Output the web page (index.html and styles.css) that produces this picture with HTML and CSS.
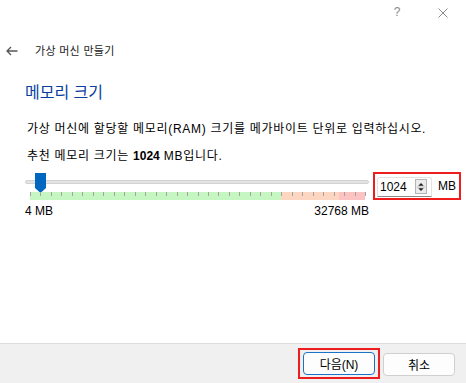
FILE: index.html
```html
<!DOCTYPE html>
<html lang="ko">
<head>
  <meta charset="UTF-8">
  <title>가상 머신 만들기</title>
  <link rel="stylesheet" href="styles.css">
</head>
<body>
  <div class="window">
    <!-- Barre de titre -->
    <div class="titlebar">
      <span class="caption-btn help">?</span>
      <span class="caption-btn">
        <svg width="10" height="10" viewBox="0 0 10 10"><path d="M0.5 0.5 L9.5 9.5 M9.5 0.5 L0.5 9.5" stroke="#8a8a8a" stroke-width="1" fill="none"/></svg>
      </span>
    </div>

    <div class="header">
      <svg class="back" width="12" height="10" viewBox="0 0 12 10"><path d="M11.5 5 H1 M5 1 L1 5 L5 9" stroke="#555" stroke-width="1.3" fill="none"/></svg>
      <span class="wizard-title">가상 머신 만들기</span>
    </div>

    <main class="page">
      <h1 class="heading">메모리 크기</h1>
      <p class="desc">가상 머신에 할당할 메모리(RAM) 크기를 메가바이트 단위로 입력하십시오.</p>
      <p class="desc">추천 메모리 크기는 <b>1024</b> MB입니다.</p>

      <div class="slider-row">
        <div class="slider">
          <div class="track"></div>
          <svg class="thumb" width="11" height="20" viewBox="0 0 11 20"><path d="M0 0 H11 V15 L5.5 20 L0 15 Z" fill="#0067c0"/></svg>
          <div class="ticks">
            <span class="seg ok"></span>
            <span class="seg warn"></span>
            <span class="seg bad"></span>
          </div>
        </div>
        <div class="spin-wrap">
          <div class="spinbox">
            <span class="spin-value">1024</span>
            <span class="spin-btns">
              <svg width="11" height="14" viewBox="0 0 11 14"><path d="M5.5 2.5 L8.5 5.5 H2.5 Z M2.5 8.5 H8.5 L5.5 11.5 Z" fill="#222"/><path d="M1 7 H10" stroke="#bdbdbd"/></svg>
            </span>
          </div>
          <span class="unit">MB</span>
        </div>
      </div>
      <div class="scale">
        <span>4 MB</span>
        <span>32768 MB</span>
      </div>
    </main>

    <footer class="footer">
      <div class="focus-ring">
        <button class="btn default">다음(N)</button>
      </div>
      <button class="btn">취소</button>
    </footer>
  </div>
</body>
</html>
```

FILE: styles.css
```css
/* Base */
* {
  box-sizing: border-box;
  margin: 0;
  padding: 0;
}
body {
  font-family: "Liberation Sans", "Noto Sans CJK KR", sans-serif;
  font-size: 12px;
  color: #000;
  background: #fff;
}
.window {
  width: 466px;
  height: 383px;
  display: flex;
  flex-direction: column;
}
/* Barre de titre */
.titlebar {
  height: 26px;
  display: flex;
  justify-content: flex-end;
}
.caption-btn {
  width: 46px;
  height: 26px;
  display: flex;
  align-items: center;
  justify-content: center;
  color: #8a8a8a;
}
.caption-btn.help {
  font-size: 12px;
  padding-bottom: 2px;
}
.header {
  display: flex;
  align-items: center;
  height: 24px;
  margin-top: 13px;
  padding-left: 6px;
}
.wizard-title {
  margin-left: 17px;
  font-size: 11px;
  letter-spacing: 0.3px;
  line-height: 24px;
  color: #1a1a1a;
}
/* Contenu */
.page {
  flex: 1;
  padding-left: 25px;
}
.heading {
  font-size: 16px;
  font-weight: normal;
  color: #0a3e9e;
  line-height: 20px;
  margin-top: 20px;
}
.desc {
  line-height: 20px;
  margin-top: 7px;
  padding-left: 2px;
  letter-spacing: 0.7px;
}
.desc:first-of-type {
  margin-top: 16px;
}
.desc b {
  font-weight: bold;
  letter-spacing: 0;
}
.slider-row {
  display: flex;
  margin-top: 6px;
  height: 28px;
}
.slider {
  position: relative;
  width: 344px;
  display: flex;
  flex-direction: column;
}
.track {
  margin-top: 8px;
  height: 4px;
  background: #e3e3e3;
  border: 1px solid #d2d2d2;
  border-radius: 2px;
}
.thumb {
  position: absolute;
  left: 10px;
  top: 1px;
}
.ticks {
  margin: 8px 0 0 5px;
  width: 335px;
  height: 8px;
  display: flex;
  position: relative;
}
.ticks::after {
  content: "";
  position: absolute;
  left: 0;
  top: 0;
  width: 336px;
  height: 4px;
  background: repeating-linear-gradient(to right, #a3a3a3 0 1px, transparent 1px 10.47px);
}
.seg.ok { width: 251px; background: #c6f7c3; }
.seg.warn { width: 58px; background: #fdd6c2; }
.seg.bad { width: 26px; background: #fcc3c3; }
.spin-wrap {
  margin-left: 4px;
  width: 88px;
  height: 28px;
  border: 2px solid #ee1c1c;
  display: flex;
  align-items: center;
  padding-left: 2px;
}
.spinbox {
  width: 55px;
  height: 20px;
  border: 1px solid #e2e2e2;
  border-bottom: 1px solid #8a8a8a;
  border-radius: 3px 3px 0 0;
  display: flex;
  align-items: center;
  justify-content: space-between;
  padding: 0 4px 0 2px;
  margin-top: 1px;
}
.spin-value {
  font-size: 12px;
}
.spin-btns {
  width: 12px;
  height: 15px;
  border: 1px solid #b4b4b4;
  background: #ececec;
  display: flex;
  align-items: center;
  justify-content: center;
}
.unit {
  margin-left: 6px;
  font-size: 12px;
}
.scale {
  width: 344px;
  display: flex;
  justify-content: space-between;
  margin-top: 4px;
  line-height: 14px;
}
/* Pied de page */
.footer {
  height: 40px;
  background: #f0f0f0;
  border-top: 1px solid #dcdcdc;
  display: flex;
  justify-content: flex-end;
  align-items: flex-start;
  padding: 4px 11px 0 0;
}
.focus-ring {
  border: 2px solid #ee1c1c;
  padding: 2px 3px;
}
.btn {
  width: 72px;
  height: 23px;
  font-family: "Liberation Sans", "Noto Sans CJK KR", sans-serif;
  font-size: 12px;
  background: #fdfdfd;
  border: 1px solid #d0d0d0;
  border-radius: 4px;
  color: #000;
}
.footer > .btn {
  margin: 5px 0 0 3px;
}
.btn.default {
  border-color: #1a73c8;
}
```
